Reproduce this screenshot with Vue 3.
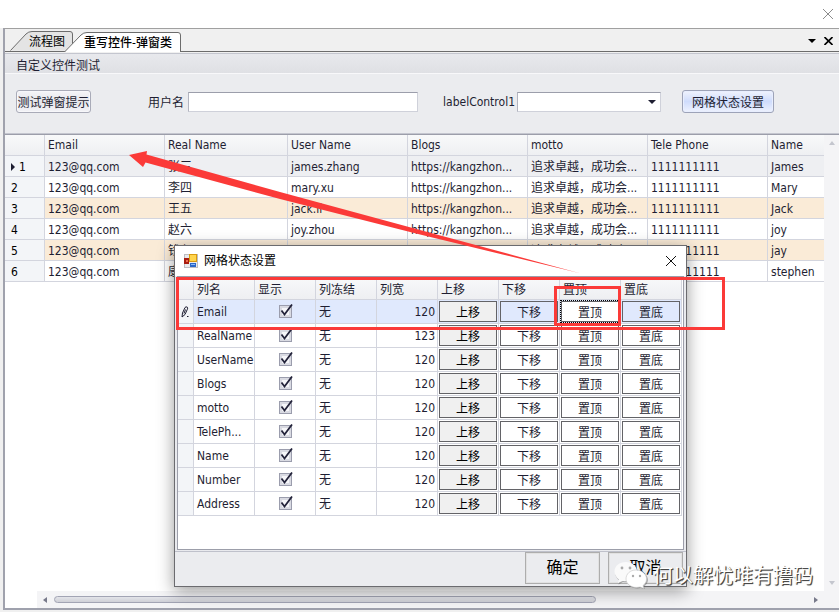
<script setup>
import { ref } from 'vue'

const user = ref('')
const option = ref('')

const people = [
  { email: '123@qq.com', real: '张三', user: 'james.zhang', name: 'James' },
  { email: '123@qq.com', real: '李四', user: 'mary.xu', name: 'Mary' },
  { email: '123@qq.com', real: '王五', user: 'jack.li', name: 'Jack' },
  { email: '123@qq.com', real: '赵六', user: 'joy.zhou', name: 'joy' },
  { email: '123@qq.com', real: '钱七', user: 'jay.qian', name: 'jay' },
  { email: '123@qq.com', real: '康八', user: 'stephen.k', name: 'stephen' }
]

const columns = ref([
  { name: 'Email', shown: true, width: 120 },
  { name: 'RealName', shown: true, width: 123 },
  { name: 'UserName', shown: true, width: 120 },
  { name: 'Blogs', shown: true, width: 120 },
  { name: 'motto', shown: true, width: 120 },
  { name: 'TelePh...', shown: true, width: 120 },
  { name: 'Name', shown: true, width: 120 },
  { name: 'Number', shown: true, width: 120 },
  { name: 'Address', shown: true, width: 120 }
])
const actions = ['上移', '下移', '置顶', '置底']
</script>

<template>
  <div class="page">
    <header class="topbar">
      <button class="plain" aria-label="关闭窗口">
        <svg width="12" height="12" viewBox="0 0 12 12"><path d="M1 1L11 11M11 1L1 11" stroke="#8c8c8c" fill="none" /></svg>
      </button>
    </header>

    <main class="workspace">
      <nav class="tabs">
        <button class="tab first">
          <svg class="shape" width="65" height="20" viewBox="0 0 65 20"><path d="M.5 19.5L16 3Q18.500 .5 22 .5H60Q62.500 .5 62.500 3V19.500" fill="#e4e4e4" stroke="#6c6c6c" /></svg>
          <span>流程图</span>
        </button>
        <button class="tab second">
          <svg class="shape" width="119" height="20" viewBox="0 0 119 20"><path d="M.5 20L17 3Q19.500 .5 23 .5H114Q116.500 .5 116.500 3V20" fill="#fff" stroke="#6c6c6c" /></svg>
          <span>重写控件-弹窗类</span>
        </button>
        <div class="tabtools">
          <button class="plain" aria-label="标签列表">
            <svg width="8" height="4" viewBox="0 0 8 4"><path d="M0 0H8L4 4Z" fill="#000" /></svg>
          </button>
          <button class="plain" aria-label="关闭标签">
            <svg width="9" height="8" viewBox="0 0 9 8"><path d="M.5 0L8.500 8M8.500 0L.5 8" stroke="#000" stroke-width="1.600" fill="none" /></svg>
          </button>
        </div>
      </nav>

      <section class="group">
        <h2 class="grouphead">自定义控件测试</h2>
        <div class="form">
          <button class="btn">测试弹窗提示</button>
          <div class="field name">
            <label for="user">用户名</label>
            <input id="user" v-model="user" type="text" />
          </div>
          <div class="field pick">
            <label for="opt">labelControl1</label>
            <div class="selectbox">
              <select id="opt" v-model="option"><option value=""></option></select>
              <svg class="caret" width="8" height="4" viewBox="0 0 8 4"><path d="M0 0H8L4 4Z" fill="#1e1e32" /></svg>
            </div>
          </div>
          <button class="btn hot">网格状态设置</button>
        </div>
      </section>

      <section class="gridarea">
        <div class="gridbody">
          <table class="data">
            <colgroup>
              <col class="c-ind" /><col class="c-120" /><col class="c-123" /><col class="c-120" />
              <col class="c-120" /><col class="c-120" /><col class="c-120" /><col />
            </colgroup>
            <thead>
              <tr>
                <th></th><th>Email</th><th>Real Name</th><th>User Name</th>
                <th>Blogs</th><th>motto</th><th>Tele Phone</th><th>Name</th>
              </tr>
            </thead>
            <tbody>
              <tr v-for="(p, i) in people" :key="i" :class="{ current: i === 0, tint: i === 2 || i === 4 }">
                <th>
                  <div class="rowno" :class="{ on: i === 0 }">
                    <svg v-if="i === 0" width="4" height="8" viewBox="0 0 4 8"><path d="M0 0L4 4L0 8Z" fill="#1e1e32" /></svg>
                    <span>{{ i + 1 }}</span>
                  </div>
                </th>
                <td>{{ p.email }}</td>
                <td>{{ p.real }}</td>
                <td>{{ p.user }}</td>
                <td>https://kangzhon...</td>
                <td>追求卓越，成功会...</td>
                <td>1111111111</td>
                <td>{{ p.name }}</td>
              </tr>
            </tbody>
          </table>
          <div class="vscroll">
            <svg width="6" height="4" viewBox="0 0 6 4"><path d="M0 4L3 0L6 4Z" fill="#c4c6ce" /></svg>
            <svg width="6" height="4" viewBox="0 0 6 4"><path d="M0 0L3 4L6 0Z" fill="#c4c6ce" /></svg>
          </div>
        </div>
        <div class="hscroll">
          <svg width="4" height="6" viewBox="0 0 4 6"><path d="M4 0L0 3L4 6Z" fill="#77798a" /></svg>
          <div class="track"><div class="thumb"></div></div>
          <svg width="4" height="6" viewBox="0 0 4 6"><path d="M0 0L4 3L0 6Z" fill="#77798a" /></svg>
        </div>
      </section>
    </main>

    <div class="dialog" role="dialog" aria-labelledby="dlg-title">
      <div class="titlebar">
        <svg width="14" height="14" viewBox="0 0 14 14">
          <rect x=".5" y=".5" width="13" height="13" fill="#e9e9ec" stroke="#bdbdc2" />
          <rect x="5" y="0" width="8" height="8" fill="#d99a10" />
          <rect x="6" y="1" width="6" height="6" fill="#ffd44c" />
          <rect x="0" y="4" width="5" height="6" fill="#a81c10" />
          <rect x="2" y="6" width="2" height="2" fill="#ee6b50" />
          <rect x="6" y="9" width="6" height="4" fill="#2c67c9" />
          <rect x="7" y="10" width="4" height="1" fill="#8dbaf5" />
        </svg>
        <h3 id="dlg-title">网格状态设置</h3>
        <button class="plain" aria-label="关闭">
          <svg width="12" height="12" viewBox="0 0 12 12"><path d="M1 1L11 11M11 1L1 11" stroke="#111" fill="none" /></svg>
        </button>
      </div>
      <div class="dlggrid">
        <table class="config">
          <colgroup>
            <col class="d-ind" /><col v-for="n in 8" :key="n" />
          </colgroup>
          <thead>
            <tr>
              <th></th><th>列名</th><th>显示</th><th>列冻结</th><th>列宽</th>
              <th v-for="a in actions" :key="a">{{ a }}</th>
            </tr>
          </thead>
          <tbody>
            <tr v-for="(c, i) in columns" :key="c.name" :class="{ picked: i === 0 }">
              <th class="mark">
                <svg v-if="i === 0" width="8" height="12" viewBox="0 0 8 12"><path d="M1 11L1.500 7L4 1.500Q5 .3 6.300 1.200Q7 2 6.400 3.200L4 8.500L1 11M4.500 3.500L3 7.500M6 10.500H7.500" fill="none" stroke="#1e1e32" /></svg>
              </th>
              <td>{{ c.name }}</td>
              <td class="mid">
                <span class="check">
                  <input v-model="c.shown" type="checkbox" :aria-label="c.name" />
                  <svg v-if="c.shown" width="14" height="14" viewBox="0 0 14 14"><path d="M2.500 6.500L5.500 10.500L13 .5" fill="none" stroke="#23233a" stroke-width="1.800" /></svg>
                </span>
              </td>
              <td>无</td>
              <td class="num">{{ c.width }}</td>
              <td v-for="(a, k) in actions" :key="a" class="act">
                <button :class="{ gray: k === 0, focus: i === 0 && k === 2 }">{{ a }}</button>
              </td>
            </tr>
          </tbody>
        </table>
      </div>
      <footer class="dlgfoot">
        <button>确定</button>
        <button>取消</button>
      </footer>
    </div>

    <svg class="marks" width="839" height="612" viewBox="0 0 839 612">
      <path d="M129 155L147 151L146.500 154.500L280 192L420 230L579 273L418 234L280 199L145.500 162.500L143 167Z" fill="#fb3a38" />
      <rect x="177.500" y="278.500" width="546" height="50" fill="none" stroke="#fb3a38" stroke-width="3" />
      <rect x="555.500" y="287.500" width="64" height="37" fill="none" stroke="#fb3a38" stroke-width="3" />
    </svg>

    <div class="watermark">
      <svg width="34" height="28" viewBox="0 0 34 28">
        <g fill="#5a5a5a" opacity=".45">
          <path d="M13 2C6 2 1 6 1 11.500C1 15 3 17.500 5.500 19.500L4.500 23.500L9 21C16 22 24 19 24 11.500C24 6 19 2 13 2Z" />
          <path d="M23 10C29 10 34 14 34 19C34 21.500 32 24 30 25.500L31 28.500L27 27C19 29 13 24 13 19C13 14 17 10 23 10Z" />
        </g>
        <path d="M12 1C5.500 1 .5 5 .5 10.500C.5 14 2.500 16.500 5 18.500L4 22L8.500 20C16 21 23 17 23 10.500C23 5 18 1 12 1Z" fill="#fafafa" />
        <path d="M22 9C28 9 32.500 13 32.500 18C32.500 21 31 23 29 24.500L30 27.500L26 26C18 28 12 23 12 18C12 13 16 9 22 9Z" fill="#fff" stroke="#c5c5c5" stroke-width=".6" />
        <g fill="#aaa"><circle cx="8" cy="7" r="1.400" /><circle cx="16" cy="7" r="1.400" /><circle cx="19" cy="15" r="1.200" /><circle cx="26" cy="15" r="1.200" /></g>
      </svg>
      <span>何以解忧唯有撸码</span>
    </div>
  </div>
</template>

<style>
body {
  margin: 0;
  background: #fff;
}
</style>

<style scoped>
.page,
.page * {
  box-sizing: border-box;
}
.page {
  position: relative;
  display: flex;
  flex-direction: column;
  min-height: 100vh;
  overflow: hidden;
  font: 12px/16px 'DejaVu Sans Condensed', 'Noto Sans CJK SC', sans-serif;
  color: #1e1e32;
  background: linear-gradient(#fff 28px, #f0f0f0 28px);
}
button,
input,
select {
  font: inherit;
  color: inherit;
  margin: 0;
  padding: 0;
}
svg {
  display: block;
  flex: none;
}
.plain {
  border: 0;
  background: none;
}
.topbar {
  display: flex;
  justify-content: flex-end;
  align-items: center;
  height: 28px;
  padding: 0 5px;
  flex: none;
}
.workspace {
  flex: 1;
  display: flex;
  flex-direction: column;
  margin: 0 0 2px 3px;
  border-top: 1px solid #a0a0a0;
  border-left: 2px solid #a0a2ad;
  border-bottom: 2px solid #9fa1ad;
  min-width: 0;
}
.tabs {
  display: flex;
  align-items: flex-end;
  height: 23px;
  padding-left: 5px;
  background: #f0f0f0;
  border-bottom: 1px solid #6c6c6c;
  color: #000;
}
.tab {
  position: relative;
  height: 20px;
  border: 0;
  background: none;
  padding-top: 2px;
  line-height: 18px;
  text-align: left;
  white-space: nowrap;
}
.tab span {
  position: relative;
}
.shape {
  position: absolute;
  left: 0;
  top: 0;
}
.first {
  width: 65px;
  padding-left: 19px;
}
.second {
  width: 119px;
  margin: 0 0 -1px -11px;
  padding-left: 20px;
  font-weight: 500;
}
.tabtools {
  display: flex;
  align-items: center;
  gap: 8px;
  align-self: center;
  margin-left: auto;
  padding: 2px 6px 0 0;
}
.group {
  margin-top: 1px;
  border-top: 1px solid #c4c6cf;
  border-bottom: 1px solid #c4c6cf;
  background: #ebecef;
}
.grouphead {
  margin: 0;
  height: 20px;
  padding: 2px 0 0 11px;
  font-size: 12px;
  line-height: 20px;
  font-weight: 400;
  background: linear-gradient(#e8e9ed, #dfe0e4);
  border-bottom: 1px solid #f8f8fa;
}
.form {
  display: flex;
  align-items: center;
  height: 59px;
  padding: 0 11px 4px;
}
.btn {
  height: 23px;
  width: 75px;
  padding-top: 2px;
  border: 1px solid #a9abb8;
  border-radius: 3px;
  background: linear-gradient(#f5f5f8, #e4e5ea 50%, #f3f3f7);
  box-shadow: inset 0 0 0 1px #f7f7fa;
  white-space: nowrap;
}
.hot {
  width: 92px;
  margin-left: 21px;
  border-color: #9da3b8;
  background: linear-gradient(#f0f3fd, #cfdcfc 50%, #eef2fe);
  box-shadow: inset 0 0 0 1px #e8eefe;
}
.field {
  display: flex;
  align-items: center;
  gap: 4px;
}
.name {
  margin-left: 57px;
}
.name label {
  padding-top: 2px;
}
.pick {
  margin-left: 25px;
}
.pick label {
  width: 70px;
  white-space: nowrap;
}
.field input,
.selectbox select {
  height: 20px;
  border: 1px solid #cfd1da;
  border-top-color: #9c9eab;
  border-left-color: #b3b5c0;
  border-radius: 0;
  background: #fff;
}
.field input {
  width: 230px;
}
.selectbox {
  position: relative;
}
.selectbox select {
  display: block;
  width: 144px;
  appearance: none;
}
.caret {
  position: absolute;
  right: 5px;
  top: 8px;
  pointer-events: none;
}
.gridarea {
  flex: 1;
  display: flex;
  flex-direction: column;
  border-top: 1px solid #9c9eaa;
  background: #fff;
}
.gridbody {
  flex: 1;
  display: flex;
}
table {
  table-layout: fixed;
  border-collapse: separate;
  border-spacing: 0;
}
th,
td {
  padding: 0 3px;
  font-weight: 400;
  text-align: left;
  white-space: nowrap;
  overflow: hidden;
  border-right: 1px solid #d3d5de;
  border-bottom: 1px solid #d3d5de;
}
.data {
  flex: 1;
  width: 100%;
  align-self: flex-start;
}
.data th,
.data td {
  height: 21px;
  line-height: 18px;
}
.data tbody th,
.data tbody td {
  padding-top: 2px;
}
.data th:last-child,
.data td:last-child {
  border-right: 0;
}
thead th {
  background: linear-gradient(#f8f9fa, #eeeff2);
}
tbody th {
  background: #f3f5f8;
}
.c-ind {
  width: 40px;
}
.c-120 {
  width: 120px;
}
.c-123 {
  width: 123px;
}
.current td {
  background: #eeeff2;
}
.tint td {
  background: #faebd7;
}
.rowno {
  display: flex;
  align-items: center;
  gap: 4px;
  padding-left: 3px;
  color: #000;
}
.vscroll {
  display: flex;
  flex: none;
  flex-direction: column;
  justify-content: space-between;
  align-items: center;
  width: 15px;
  padding: 6px 0;
  background: #f4f4f6;
}
.hscroll {
  display: flex;
  align-items: center;
  gap: 7px;
  height: 17px;
  margin-left: 32px;
  padding: 0 21px 0 6px;
  background: #f4f4f6;
}
.track {
  flex: 1;
}
.thumb {
  width: 72%;
  height: 7px;
  border: 1px solid #a2a4b4;
  border-radius: 4px;
  background: linear-gradient(#e3e4e9, #cfd0d7);
}
.dialog {
  position: absolute;
  left: 174px;
  top: 245px;
  width: 513px;
  border: 1px solid #6b6b6f;
  background: #e9eaee;
  box-shadow: 0 4px 16px rgba(0, 0, 0, 0.4);
}
.titlebar {
  display: flex;
  align-items: center;
  gap: 6px;
  height: 30px;
  padding: 0 9px;
  background: #fff;
  color: #000;
}
.titlebar h3 {
  flex: 1;
  margin: 0;
  font-size: 12px;
  font-weight: 400;
}
.dlggrid {
  height: 274px;
  margin: 0 2px;
  border: 1px solid #9c9eaa;
  background: #fff;
}
.config {
  width: 504px;
}
.d-ind {
  width: 16px;
}
.config thead th {
  height: 23px;
  padding-top: 4px;
}
.config tbody tr {
  height: 24px;
}
.config td {
  padding: 0 2px 0 3px;
}
.config .mark {
  padding: 0 3px;
}
.config .mid {
  padding: 0;
}
.picked td {
  background: #e0e9fd;
}
.check {
  position: relative;
  display: block;
  width: 13px;
  height: 13px;
  margin: 0 auto;
}
.check input {
  display: block;
  width: 13px;
  height: 13px;
  appearance: none;
  border: 1px solid #9b9dad;
  background: #f6f6f9;
  box-shadow: inset 0 0 0 2px #d9dae2;
}
.check svg {
  position: absolute;
  left: 0;
  top: -1px;
  pointer-events: none;
}
.num {
  text-align: right;
}
.config .act {
  padding: 1px;
}
.act button {
  display: block;
  width: 100%;
  height: 21px;
  padding-top: 2px;
  border: 1px solid #636367;
  background: #fff;
}
.picked .act button {
  background: #e0e9fd;
}
.act .gray,
.picked .act .gray {
  background: #f0f0f0;
  color: #000;
}
.picked .act .focus {
  background: #fff;
  outline: 1px dotted #000;
}
.dlgfoot {
  display: flex;
  justify-content: flex-end;
  gap: 8px;
  height: 35px;
  margin-top: 1px;
  padding: 0 3px 0 0;
  border-top: 1px solid #bfc1cb;
  background: #ebecef;
}
.dlgfoot button {
  width: 75px;
  height: 32px;
  border: 1px solid #adadad;
  box-shadow: inset 0 0 0 1px #e1e1e1;
  background: #ebecef;
  color: #000;
  font-size: 16px;
}
.marks {
  position: absolute;
  left: 0;
  top: 0;
  pointer-events: none;
}
.watermark {
  position: absolute;
  left: 614px;
  top: 561px;
  display: flex;
  gap: 5px;
  font-size: 20px;
  line-height: 30px;
  color: #fff;
  text-shadow: 1px 1px 1px #444, 1px 1px 0 #666;
  white-space: nowrap;
  pointer-events: none;
}
</style>
